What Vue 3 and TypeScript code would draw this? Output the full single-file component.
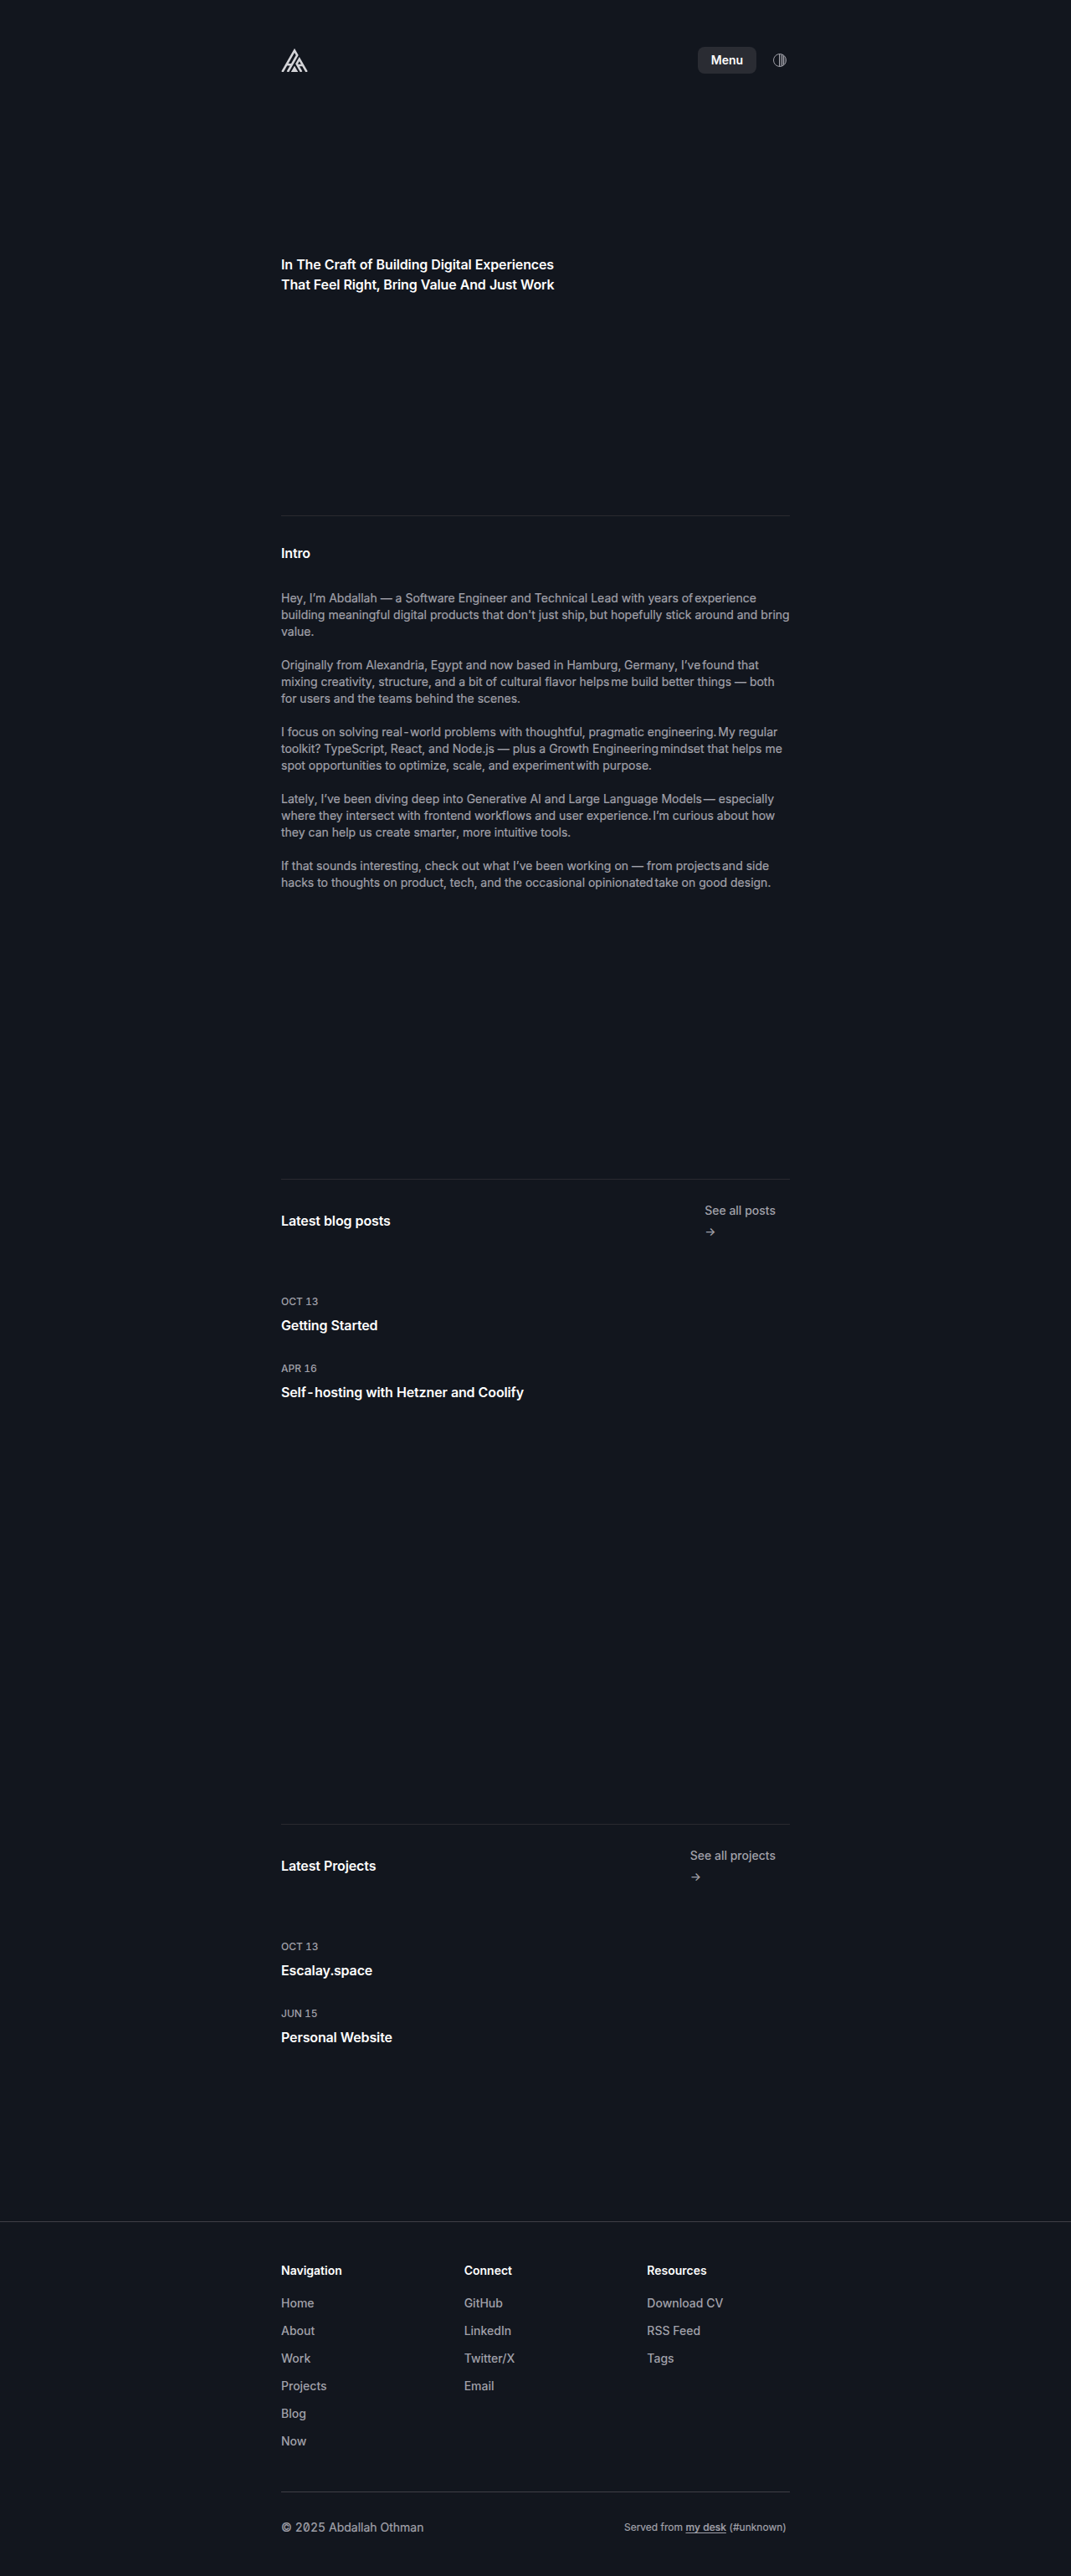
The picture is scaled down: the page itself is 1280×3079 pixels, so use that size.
<script setup lang="ts">
interface Entry {
  date: string
  title: string
}
interface FooterColumn {
  heading: string
  links: string[]
}

const heroLines: string[] = [
  'In The Craft of Building Digital Experiences',
  'That Feel Right, Bring Value And Just Work',
]

const intro: string[][] = [
  'Hey, I’m Abdallah — a Software Engineer and Technical Lead with years of\nexperience building meaningful digital products that don\'t just ship,\nbut hopefully stick around and bring value.',
  'Originally from Alexandria, Egypt and now based in Hamburg, Germany, I’ve\nfound that mixing creativity, structure, and a bit of cultural flavor helps\nme build better things — both for users and the teams behind the scenes.',
  'I focus on solving real-world problems with thoughtful, pragmatic engineering.\nMy regular toolkit? TypeScript, React, and Node.js — plus a Growth Engineering\nmindset that helps me spot opportunities to optimize, scale, and experiment\nwith purpose.',
  'Lately, I’ve been diving deep into Generative AI and Large Language Models\n— especially where they intersect with frontend workflows and user experience.\nI’m curious about how they can help us create smarter, more intuitive tools.',
  'If that sounds interesting, check out what I’ve been working on — from projects\nand side hacks to thoughts on product, tech, and the occasional opinionated\ntake on good design.',
].map((text) => text.split('\n'))

const posts: Entry[] = [
  { date: 'Oct 13', title: 'Getting Started' },
  { date: 'Apr 16', title: 'Self-hosting with Hetzner and Coolify' },
]

const projects: Entry[] = [
  { date: 'Oct 13', title: 'Escalay.space' },
  { date: 'Jun 15', title: 'Personal Website' },
]

const columns: FooterColumn[] = [
  { heading: 'Navigation', links: ['Home', 'About', 'Work', 'Projects', 'Blog', 'Now'] },
  { heading: 'Connect', links: ['GitHub', 'LinkedIn', 'Twitter/X', 'Email'] },
  { heading: 'Resources', links: ['Download CV', 'RSS Feed', 'Tags'] },
]
</script>

<template>
  <div class="page">
    <header class="wrap header">
      <a class="logo" aria-label="Home">
        <svg width="32" height="28" viewBox="0 0 32 28" fill="none" stroke="currentColor" stroke-width="2.6">
          <path d="M1.4 28 16 2.4 19.2 8 7.8 28M7.4 19.2h5.4" />
          <path d="M30.6 28 21.8 12.6 18.6 18.2 24.2 28M19.4 20h6" />
          <path d="M11.8 28 16 20.8 20.2 28Z" fill="currentColor" stroke="none" />
        </svg>
      </a>
      <div class="actions">
        <button class="menu">Menu</button>
        <svg class="theme" width="16" height="16" viewBox="0 0 16 16" fill="none" stroke="currentColor">
          <circle cx="8" cy="8" r="7.5" />
          <path d="M8 .5a7.5 7.5 0 0 1 0 15Z" fill="currentColor" fill-opacity=".3" stroke="none" />
          <path d="M7.5 .5v15M10.5 1.2v13.6M12.5 2.4v11.2" />
        </svg>
      </div>
    </header>

    <main class="wrap">
      <h1 class="hero">
        <span v-for="line in heroLines" :key="line" class="line">{{ line }}</span>
      </h1>

      <section class="section intro">
        <h2>Intro</h2>
        <div class="prose">
          <p v-for="(para, i) in intro" :key="i">
            <template v-for="(part, j) in para" :key="j"><span v-if="j" class="tight">{{ ' ' }}</span>{{ part }}</template>
          </p>
        </div>
      </section>

      <section class="section posts">
        <div class="section-head">
          <h2>Latest blog posts</h2>
          <a class="more"><span>See all posts</span><span>→</span></a>
        </div>
        <article v-for="e in posts" :key="e.title" class="entry">
          <time>{{ e.date }}</time>
          <h3>{{ e.title }}</h3>
        </article>
      </section>

      <section class="section projects">
        <div class="section-head">
          <h2>Latest Projects</h2>
          <a class="more"><span>See all projects</span><span>→</span></a>
        </div>
        <article v-for="e in projects" :key="e.title" class="entry">
          <time>{{ e.date }}</time>
          <h3>{{ e.title }}</h3>
        </article>
      </section>
    </main>

    <footer class="footer">
      <div class="wrap">
        <div class="columns">
          <nav v-for="c in columns" :key="c.heading">
            <h4>{{ c.heading }}</h4>
            <a v-for="l in c.links" :key="l">{{ l }}</a>
          </nav>
        </div>
        <div class="bottom">
          <span class="copy">© 2025 Abdallah Othman</span>
          <span class="served">Served from <a>my desk</a> (#unknown)</span>
        </div>
      </div>
    </footer>
  </div>
</template>

<style>
body {
  margin: 0;
  background: #12161e;
}
</style>

<style scoped>
.page {
  height: 3079px;
  box-sizing: border-box;
  background: #12161e;
  color: #fff;
  font-family: Inter, 'Liberation Sans', sans-serif;
  font-size: 14px;
  line-height: 20px;
  font-feature-settings: 'tnum', 'zero';
}
h1, h2, h3, h4, p {
  margin: 0;
}
.wrap {
  width: 608px;
  margin: 0 auto;
}
.line {
  display: block;
  white-space: nowrap;
}
.header {
  display: flex;
  justify-content: space-between;
  align-items: center;
  padding-top: 56px;
  height: 32px;
}
.logo {
  display: flex;
  color: #d4d4d8;
}
.actions {
  display: flex;
  align-items: center;
  gap: 20px;
  padding-right: 4px;
}
.menu {
  width: 70px;
  height: 32px;
  padding: 0;
  border: 0;
  border-radius: 8px;
  background: #2a2c33;
  color: #fff;
  font: 600 14px/20px Inter, sans-serif;
}
.theme {
  color: #9c9ca4;
}
.hero {
  padding-top: 216px;
  height: 312px;
  font-size: 16px;
  line-height: 24px;
  font-weight: 600;
  letter-spacing: -0.13px;
}
.section {
  box-sizing: border-box;
  border-top: 1px solid #2a2a30;
}
.section h2,
.entry h3 {
  font-size: 16px;
  line-height: 24px;
  font-weight: 600;
  letter-spacing: -0.13px;
}
.intro {
  height: 793px;
  padding-top: 32px;
}
.prose {
  margin-top: 32px;
  margin-right: -2px;
  display: flex;
  flex-direction: column;
  gap: 20px;
  color: #a1a1aa;
  word-spacing: 0.17px;
}
.prose,
.copy,
.served {
  -webkit-text-stroke: 0.2px currentColor;
}
.tight {
  font-size: 7px;
  line-height: 0;
  word-spacing: 0;
}
.posts {
  height: 771px;
}
.projects {
  height: 475px;
}
.posts,
.projects {
  padding-top: 24px;
}
.section-head {
  display: flex;
  justify-content: space-between;
  align-items: center;
  height: 50px;
  margin-bottom: 60px;
}
.more {
  display: flex;
  flex-direction: column;
  padding-right: 17px;
  line-height: 25px;
  font-weight: 500;
  color: #a1a1aa;
}
.entry {
  height: 80px;
}
.entry time {
  display: block;
  font-size: 12px;
  line-height: 24px;
  margin-bottom: 4px;
  font-weight: 500;
  text-transform: uppercase;
  color: #a1a1aa;
}
.footer {
  border-top: 1px solid #3f3f46;
}
.columns {
  display: grid;
  grid-template-columns: repeat(3, 1fr);
  column-gap: 48px;
  padding-top: 48px;
  height: 274px;
}
.columns h4 {
  font-size: 14px;
  line-height: 20px;
  font-weight: 600;
  margin-bottom: 16px;
}
.columns a {
  display: block;
  line-height: 25px;
  margin-bottom: 8px;
  font-weight: 500;
  color: #a1a1aa;
}
.bottom {
  display: flex;
  justify-content: space-between;
  align-items: center;
  border-top: 1px solid #3f3f46;
  padding: 32px 4px 0 0;
  color: #a1a1aa;
  word-spacing: 0.17px;
}
.served {
  font-size: 12px;
}
.served a {
  font-weight: 500;
  text-decoration: underline;
  text-underline-offset: 2px;
}
</style>
